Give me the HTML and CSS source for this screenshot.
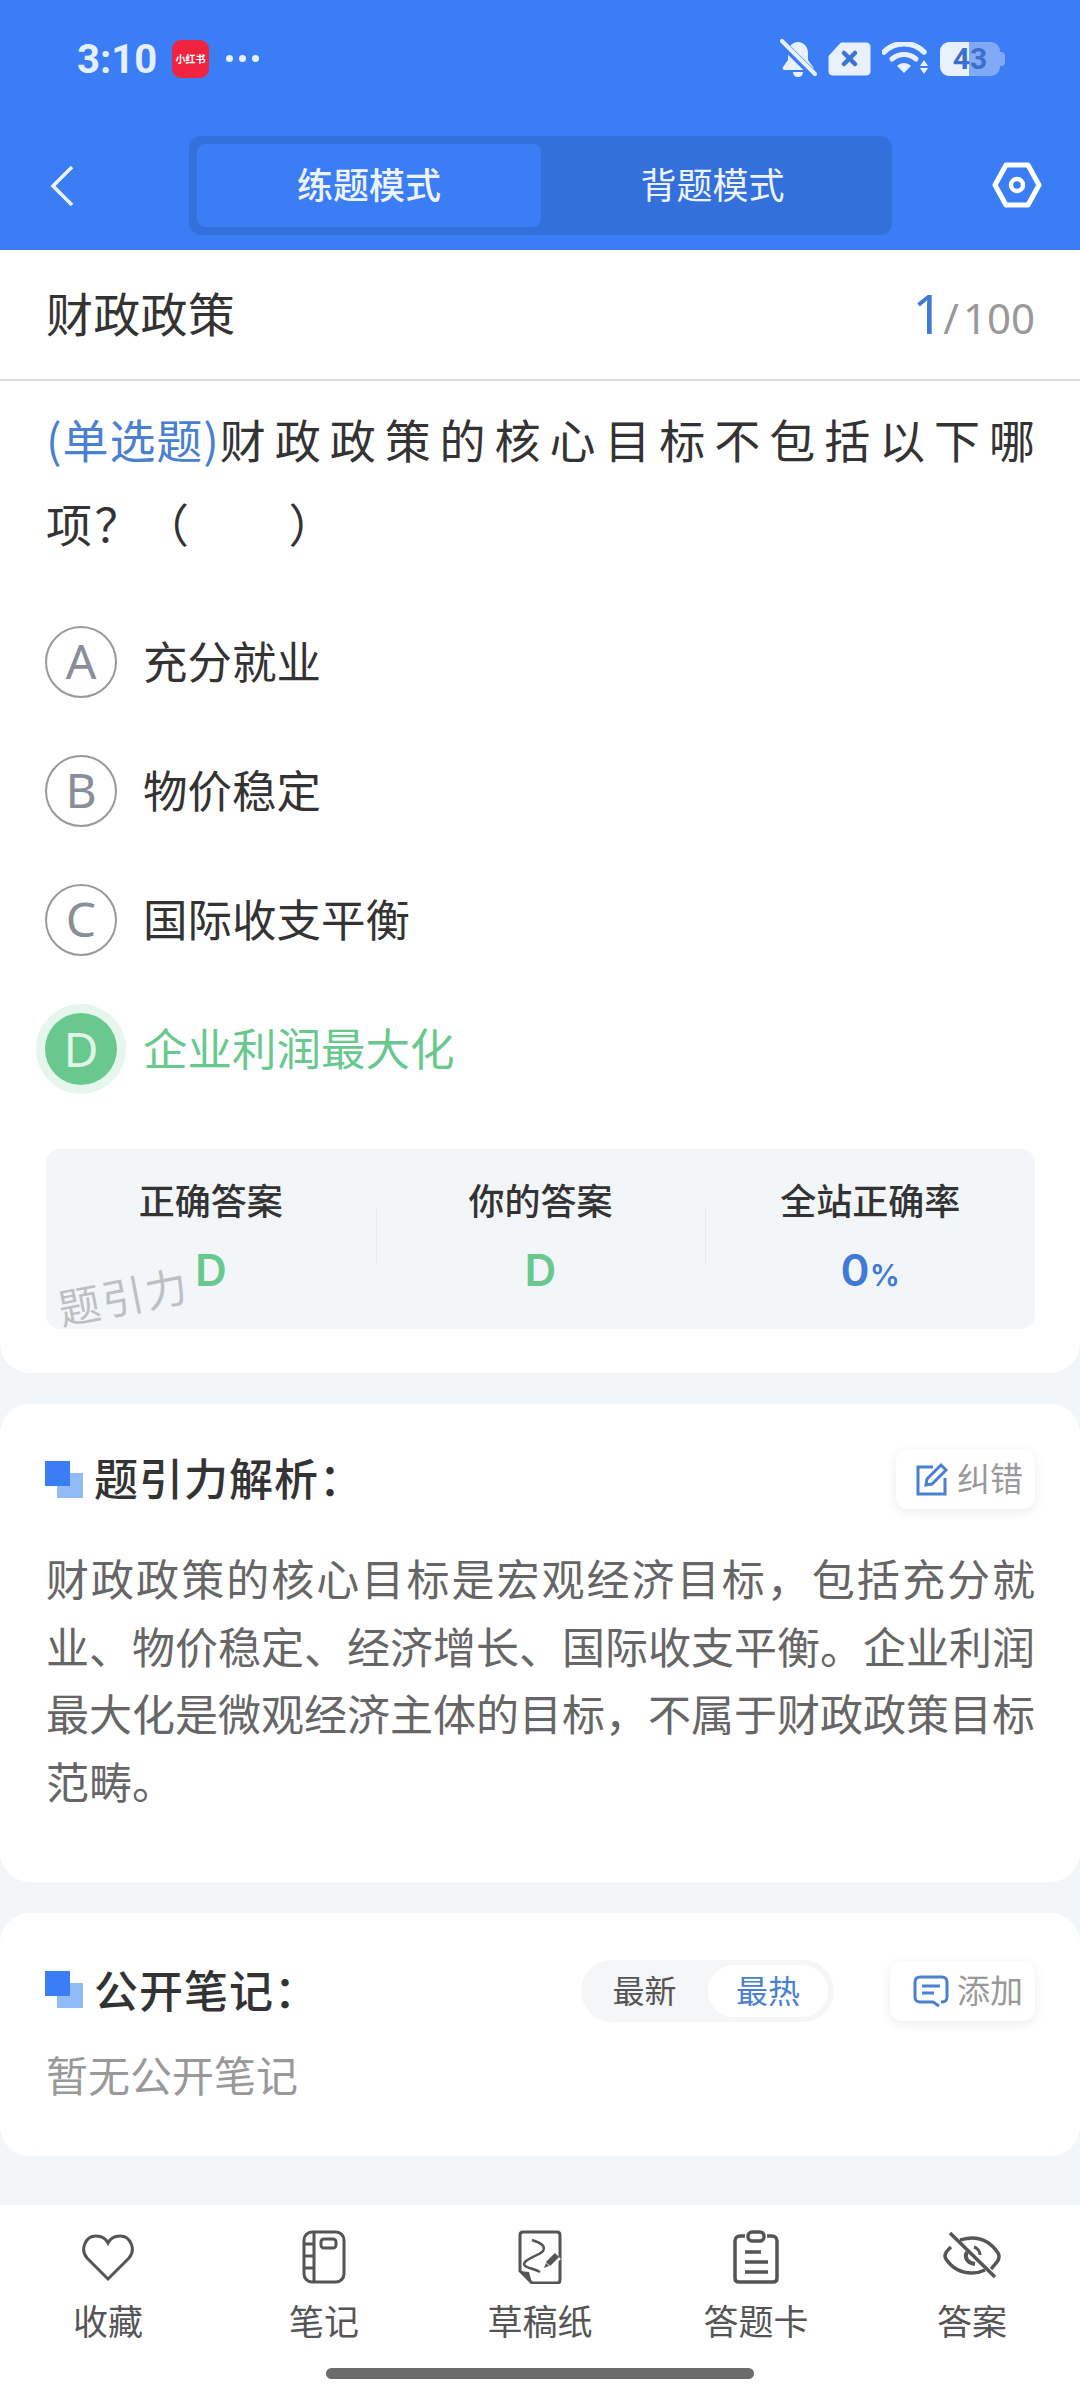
FILE: index.html
```html
<!DOCTYPE html>
<html lang="zh-CN">
<head>
    <meta charset="utf-8">
    <title>财政政策</title>
    <link rel="stylesheet" href="styles.css">
</head>
<body>
    <header class="top">
        <div class="status">
            <span class="time">3:10</span>
            <span class="app-icon">小红书</span>
            <span class="dots"><i></i><i></i><i></i></span>
            <span class="status-right">
                <svg width="37" height="40" viewBox="0 0 37 40"><path d="M18 3c-6 0-10 5-10 11v7l-5 7c-1 2 0 3 2 3h27c2 0 2-2 1-3l-5-7v-7c0-6-4-11-10-11z" fill="#e9f1fe"/><path d="M13 33h10c0 3-2 5-5 5s-5-2-5-5z" fill="#e9f1fe"/><path d="M1 3l34 34" stroke="#3b7df4" stroke-width="8"/><path d="M2 2l33 33" stroke="#e9f1fe" stroke-width="4" stroke-linecap="round"/></svg>
                <svg width="43" height="34" viewBox="0 0 43 34"><path d="M13 1h25c3 0 4 1 4 4v24c0 3-1 4-4 4H5c-3 0-4-1-4-4V14z" fill="#e9f1fe" stroke="#e9f1fe" stroke-linejoin="round"/><path d="M16 11l11 11M27 11L16 22" stroke="#3a74d8" stroke-width="4.5" stroke-linecap="round"/></svg>
                <svg width="47" height="33" viewBox="0 0 47 33"><path d="M2 10c11-11 29-11 40 0" fill="none" stroke="#e9f1fe" stroke-width="5.5" stroke-linecap="round"/><path d="M10 17c7-6 17-6 24 0" fill="none" stroke="#e9f1fe" stroke-width="5" stroke-linecap="round"/><path d="M15 24c4-4 10-4 14 0l-7 7z" fill="#e9f1fe"/><path d="M42 18l4 6h-8zM38 26h8l-4 6z" fill="#e9f1fe"/></svg>
                <span class="battery">43</span>
            </span>
        </div>
        <nav class="navbar">
            <svg class="back" width="24" height="42" viewBox="0 0 24 42"><path d="M22 2L3 21l19 19" fill="none" stroke="#eef4ff" stroke-width="3.5"/></svg>
            <div class="mode-tabs">
                <span class="mode-tab active">练题模式</span>
                <span class="mode-tab">背题模式</span>
            </div>
            <svg class="gear" width="50" height="46" viewBox="0 0 50 46"><path d="M14 3h22l11 20-11 20H14L3 23z" fill="none" stroke="#fff" stroke-width="5" stroke-linejoin="round"/><circle cx="25" cy="23" r="6" fill="none" stroke="#fff" stroke-width="4.5"/></svg>
        </nav>
    </header>

    <main class="content">
        <section class="card first">
            <div class="subject">
                <span class="subject-name">财政政策</span>
                <span class="progress"><b>1</b><em>/</em>100</span>
            </div>
            <p class="question"><span class="tag">(单选题)</span><span class="stem">财政政策的核心目标不包括以下</span>哪<span class="stem-end">项？（　　）</span></p>

            <div class="option"><span class="letter">A</span><span class="option-text">充分就业</span></div>
            <div class="option"><span class="letter">B</span><span class="option-text">物价稳定</span></div>
            <div class="option"><span class="letter">C</span><span class="option-text">国际收支平衡</span></div>
            <div class="option right"><span class="letter">D</span><span class="option-text">企业利润最大化</span></div>

            <div class="result">
                <div class="result-col">
                    <span class="result-label">正确答案</span>
                    <span class="result-value green">D</span>
                </div>
                <div class="result-col">
                    <span class="result-label">你的答案</span>
                    <span class="result-value green">D</span>
                </div>
                <div class="result-col">
                    <span class="result-label">全站正确率</span>
                    <span class="result-value blue">0<small>%</small></span>
                </div>
                <span class="watermark">题引力</span>
            </div>
        </section>

        <section class="card analysis">
            <div class="card-head">
                <svg class="squares" width="38" height="37" viewBox="0 0 38 37"><rect x="12" y="12" width="26" height="25" fill="#92bcf8"/><rect width="25" height="25" fill="#3b7df4"/></svg>
                <h2>题引力解析：</h2>
                <span class="chip">
                    <svg width="34" height="34" viewBox="0 0 34 34"><path d="M18 5H3v27h27V16" fill="none" stroke="#4a80d0" stroke-width="3"/><path d="M11 23l1-6L26 3l5 5-14 14z" fill="none" stroke="#4a80d0" stroke-width="3"/></svg>
                    <span>纠错</span>
                </span>
            </div>
            <p class="analysis-text">财政政策的核心目标是宏观经济目标，包括充分就业、物价稳定、经济增长、国际收支平衡。企业利润最大化是微观经济主体的目标，不属于财政政策目标范畴。</p>
        </section>

        <section class="card notes">
            <div class="card-head">
                <svg class="squares" width="38" height="37" viewBox="0 0 38 37"><rect x="12" y="12" width="26" height="25" fill="#92bcf8"/><rect width="25" height="25" fill="#3b7df4"/></svg>
                <h2>公开笔记：</h2>
                <div class="sort">
                    <span class="sort-item">最新</span>
                    <span class="sort-item active">最热</span>
                </div>
                <span class="chip">
                    <svg width="36" height="33" viewBox="0 0 36 33"><path d="M28 27h1c3 0 5-2 5-5V7c0-3-2-5-5-5H7C4 2 2 4 2 7v15c0 3 2 5 5 5h13l6 4" fill="none" stroke="#4a80d0" stroke-width="3"/><path d="M9 11h18M9 18h12" stroke="#4a80d0" stroke-width="3"/></svg>
                    <span>添加</span>
                </span>
            </div>
            <p class="empty">暂无公开笔记</p>
        </section>
    </main>

    <footer class="bottom">
        <div class="tabs">
            <div class="tab">
                <svg width="54" height="54" viewBox="0 0 54 54"><path d="M27 49L6 28C-1 20 4 6 15 6c6 0 10 3 12 7 2-4 6-7 12-7 11 0 16 14 9 22z" fill="none" stroke="#555" stroke-width="3"/></svg>
                <span>收藏</span>
            </div>
            <div class="tab">
                <svg width="44" height="54" viewBox="0 0 44 54"><rect x="2" y="2" width="40" height="50" rx="8" fill="none" stroke="#555" stroke-width="3"/><path d="M12 2v50M2 14h10M2 26h10M2 38h10" fill="none" stroke="#555" stroke-width="3"/><rect x="19" y="9" width="15" height="9" rx="3" fill="none" stroke="#555" stroke-width="3"/></svg>
                <span>笔记</span>
            </div>
            <div class="tab">
                <svg width="46" height="54" viewBox="0 0 46 54"><path d="M6 2h34c2 0 3 1 3 3v45c0 2-1 3-3 3H15L3 41V5c0-2 1-3 3-3z" fill="none" stroke="#555" stroke-width="3"/><path d="M3 41l9 1 3 11z" fill="#555"/><path d="M15 10C24 13 29 16 26 21 22 26 8 28 7 34 7 38 16 38 23 42" fill="none" stroke="#555" stroke-width="2.5"/><path d="M30 35l10-10" stroke="#fff" stroke-width="11"/><path d="M31 34l9-9" stroke="#555" stroke-width="6"/><path d="M27 38l2-5 3 3z" fill="#555"/></svg>
                <span>草稿纸</span>
            </div>
            <div class="tab">
                <svg width="46" height="54" viewBox="0 0 46 54"><path d="M12 6H7c-3 0-5 2-5 5v37c0 3 2 4 4 4h34c2 0 4-1 4-4V11c0-3-2-5-5-5h-5" fill="none" stroke="#555" stroke-width="3.5"/><rect x="15" y="2" width="16" height="9" rx="4" fill="none" stroke="#555" stroke-width="3.5"/><path d="M12 22h16M12 32h23M12 42h23" stroke="#555" stroke-width="3.5"/></svg>
                <span>答题卡</span>
            </div>
            <div class="tab">
                <svg width="58" height="54" viewBox="0 0 58 54"><path d="M8 17C2 22 1 26 3 29c6 9 15 14 26 14 5 0 9-1 13-3M17 10c4-1 8-2 12-2 11 0 20 6 26 15 2 3 1 6-1 9-2 2-4 5-6 7" fill="none" stroke="#555" stroke-width="3.5"/><path d="M24 22c-3 5 0 11 8 12" fill="none" stroke="#555" stroke-width="4"/><path d="M31 17c3 1 6 4 6 8" fill="none" stroke="#555" stroke-width="3"/><path d="M7 3l45 44" stroke="#555" stroke-width="3.5"/></svg>
                <span>答案</span>
            </div>
        </div>
        <div class="home-bar"></div>
    </footer>
</body>
</html>
```

FILE: styles.css
```css
* {
    box-sizing: border-box;
}
html, body {
    margin: 0;
    padding: 0;
}
body {
    width: 1080px;
    height: 2400px;
    overflow: hidden;
    display: flex;
    flex-direction: column;
    background: #f3f6f8;
    color: #333;
    font-family: "Noto Sans CJK SC", "Noto Sans", sans-serif;
}

/* top blue area */
.top {
    height: 250px;
    background: #3b7df4;
    color: #eef4ff;
}
.status {
    height: 120px;
    padding: 0 75px 3px 77px;
    display: flex;
    align-items: center;
}
.time {
    margin-top: 2px;
    font-family: Roboto, sans-serif;
    font-size: 40px;
    font-weight: 700;
    width: 95px;
    color: #e6effe;
}
.app-icon {
    width: 37px;
    height: 38px;
    border-radius: 9px;
    background: #f0243f;
    color: #fff;
    font-size: 10px;
    font-weight: 700;
    display: flex;
    align-items: center;
    justify-content: center;
    white-space: nowrap;
}
.dots {
    margin-left: 17px;
    display: flex;
    gap: 6px;
}
.dots i {
    width: 7px;
    height: 7px;
    border-radius: 50%;
    background: #e9f1fe;
}
.status-right {
    margin-left: auto;
    display: flex;
    align-items: center;
    gap: 11px;
}
.battery {
    position: relative;
    width: 60px;
    height: 34px;
    margin-right: 5px;
    border-radius: 9px;
    background: linear-gradient(90deg, #e9f1fe 48%, #80aaf6 48%);
    color: #3a6fd0;
    font-family: Roboto, sans-serif;
    font-size: 30px;
    font-weight: 700;
    line-height: 34px;
    text-align: center;
}
.battery::after {
    content: "";
    position: absolute;
    right: -5px;
    top: 10px;
    width: 5px;
    height: 14px;
    border-radius: 0 4px 4px 0;
    background: #80aaf6;
}
.navbar {
    height: 130px;
    padding: 0 38px 0 50px;
    display: flex;
    align-items: flex-start;
}
.back {
    margin-top: 45px;
}
.gear {
    margin-top: 42px;
    margin-left: auto;
}
.mode-tabs {
    margin: 16px 0 0 115px;
    width: 703px;
    height: 99px;
    padding: 8px;
    border-radius: 12px;
    background: #3470dc;
    display: flex;
}
.mode-tab {
    flex: 1;
    font-size: 36px;
    line-height: 79px;
    text-align: center;
    border-radius: 8px;
}
.mode-tab.active {
    flex: 0 0 344px;
    background: #3b7df4;
    font-weight: 500;
}

/* cards */
.content {
    flex: 1;
    display: flex;
    flex-direction: column;
    gap: 31px;
}
.card {
    background: #fff;
    border-radius: 30px;
    padding: 0 45px;
}
.card.first {
    height: 1123px;
    border-radius: 0 0 30px 30px;
}
.subject {
    height: 131px;
    margin: 0 -45px;
    padding: 0 45px 3px 46px;
    border-bottom: 2px solid #ddd;
    display: flex;
    align-items: center;
    justify-content: space-between;
}
.subject-name {
    margin-bottom: 3px;
    font-size: 47px;
    letter-spacing: 0.3px;
}
.progress {
    color: #999;
    font-family: "Noto Sans", sans-serif;
    font-size: 42px;
}
.progress b {
    color: #3f7ad6;
    font-size: 54px;
    font-weight: 400;
}
.progress em {
    font-style: normal;
    margin: 0 4px 0 0;
}
.question {
    margin: 15px 0 33px 1px;
    font-size: 46px;
    line-height: 84px;
    text-align: justify;
}
.tag {
    color: #4a80d0;
}
.stem {
    letter-spacing: 8px;
}
.stem-end {
    letter-spacing: 2.5px;
}
.option {
    height: 129px;
    display: flex;
    align-items: center;
    gap: 26px;
    font-size: 44.5px;
}
.option-text {
    margin-bottom: 4px;
}
.letter {
    width: 72px;
    height: 72px;
    border-radius: 50%;
    border: 2px solid #999;
    color: #8a8d9a;
    font-family: "Noto Sans", sans-serif;
    font-size: 48px;
    line-height: 66px;
    text-align: center;
}
.option.right {
    color: #68c88e;
}
.option.right .letter {
    border: none;
    background: #68c88e;
    color: #dff5e8;
    line-height: 72px;
    box-shadow: 0 0 0 9px #e6f6ec;
}
.result {
    position: relative;
    margin: 36px 0 0 1px;
    height: 180px;
    border-radius: 14px;
    background: #f3f6f8;
    display: flex;
}
.result-col {
    flex: 1;
    padding-top: 27px;
    display: flex;
    flex-direction: column;
    align-items: center;
    gap: 23px;
}
.result-col + .result-col {
    background: linear-gradient(#e6e9eb, #e6e9eb) left 60px / 1px 56px no-repeat;
}
.result-label {
    font-size: 36px;
    line-height: 46px;
    font-weight: 500;
}
.result-value {
    font-family: Inter, sans-serif;
    font-size: 44px;
    line-height: 50px;
    font-weight: 600;
}
.result-value small {
    font-size: 30px;
}
.green {
    color: #68c88e;
}
.blue {
    color: #3f7ad6;
}
.watermark {
    position: absolute;
    left: 11px;
    top: 115px;
    color: #bcc0c4;
    font-size: 42px;
    transform: rotate(-11deg);
    letter-spacing: 2px;
}
.card-head {
    display: flex;
    align-items: center;
}
.squares {
    margin-right: 11px;
}
.notes .squares {
    margin-bottom: 3px;
}
.card-head h2 {
    margin: 0 0 4px;
    font-size: 44px;
    line-height: 56px;
    font-weight: 500;
    letter-spacing: 1px;
}
.chip {
    margin-left: auto;
    height: 60px;
    padding: 0 12px 0 19px;
    border-radius: 12px;
    background: #fff;
    box-shadow: 0 3px 12px rgba(0, 0, 0, 0.08);
    color: #999;
    font-size: 33px;
    display: flex;
    align-items: center;
    gap: 8px;
}
.chip span {
    margin-bottom: 4px;
}
.analysis {
    height: 478px;
    padding-top: 45px;
}
.analysis-text {
    margin: 35px 0 0 1px;
    color: #666;
    font-size: 43px;
    line-height: 67.5px;
    text-align: justify;
}
.notes {
    height: 243px;
    padding-top: 47px;
}
.sort {
    margin-left: auto;
    width: 253px;
    height: 62px;
    padding: 5px 6px 5px 0;
    border-radius: 31px;
    background: #f5f6f7;
    display: flex;
    font-size: 32px;
}
.sort-item {
    flex: 1;
    text-align: center;
    line-height: 48px;
    color: #555;
    border-radius: 26px;
}
.sort-item.active {
    flex: 0 0 120px;
    background: #fff;
    color: #4a80d0;
}
.notes .chip {
    margin-left: 56px;
    padding-left: 23px;
}
.empty {
    margin: 24px 0 0 1px;
    color: #999;
    font-size: 42px;
    line-height: 56px;
}

/* bottom bar */
.bottom {
    height: 195px;
    background: #fff;
}
.tabs {
    height: 159px;
    display: grid;
    grid-template-columns: repeat(5, 216px);
}
.tab {
    padding-top: 25px;
    display: flex;
    flex-direction: column;
    align-items: center;
    gap: 14px;
    color: #555;
    font-size: 35px;
    line-height: 44px;
}
.home-bar {
    width: 428px;
    height: 11px;
    margin: 4px auto 0;
    border-radius: 6px;
    background: #6b6b6b;
}
```
